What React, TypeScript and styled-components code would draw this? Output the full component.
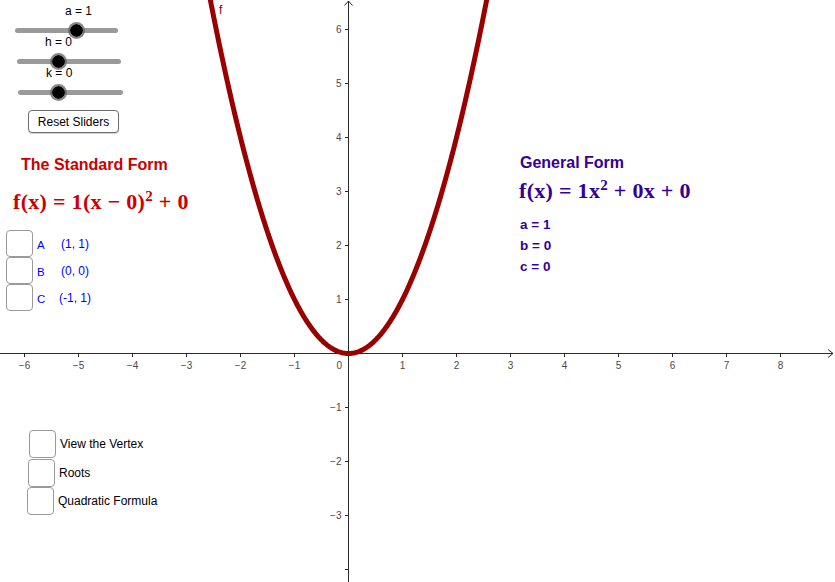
import React from "react";
import styled, { createGlobalStyle } from "styled-components";

const GlobalStyle = createGlobalStyle`
  html, body { margin: 0; padding: 0; background: #fff; }
  body { font-family: "Liberation Sans", Arial, sans-serif; }
  * { box-sizing: border-box; }
`;

const W = 835;
const H = 582;
const OX = 348.5;
const OY = 353.5;
const U = 54;

const RED = "#cc0000";
const DARKRED = "#990000";
const PURPLE = "#330099";
const BLUE = "#0000ff";

const Canvas = styled.div`
  position: relative;
  width: ${W}px;
  height: ${H}px;
  overflow: hidden;
  background: #fff;
`;

const Graph = styled.svg`
  position: absolute;
  left: 0;
  top: 0;
  display: block;
`;

const AxisLabel = styled.text`
  font-family: "Liberation Sans", Arial, sans-serif;
  font-size: 10px;
  fill: #4a4a4a;
`;

const CurveLabel = styled.text`
  font-family: "Liberation Sans", Arial, sans-serif;
  font-size: 12px;
  fill: ${DARKRED};
`;

/* ---------- sliders ---------- */
const SliderPanel = styled.div`
  position: absolute;
  left: 0;
  top: 5px;
  width: 130px;
  display: flex;
  flex-direction: column;
`;

const SliderBlock = styled.div`
  display: flex;
  flex-direction: column;
`;

const SliderLabel = styled.div<{ $left: number }>`
  margin-left: ${(p) => p.$left}px;
  height: 12px;
  font-size: 12px;
  line-height: 12px;
  color: #000;
  white-space: nowrap;
`;

const Track = styled.div<{ $left: number; $width: number }>`
  position: relative;
  margin-left: ${(p) => p.$left}px;
  margin-top: 7px;
  width: ${(p) => p.$width}px;
  height: 12px;
  &::before {
    content: "";
    position: absolute;
    left: 0;
    right: 0;
    top: 50%;
    height: 5px;
    margin-top: -2.5px;
    background: #9a9a9a;
    border-radius: 3px;
  }
`;

const Knob = styled.span<{ $pos: number }>`
  position: absolute;
  top: 50%;
  left: ${(p) => p.$pos * 100}%;
  width: 17px;
  height: 17px;
  margin: -8.5px 0 0 -8.5px;
  border: 2.5px solid rgba(95, 95, 95, 0.75);
  background: #000;
  border-radius: 50%;
  background-clip: padding-box;
`;

const ResetButton = styled.button`
  margin: 12px 0 0 28px;
  width: 91px;
  height: 23px;
  padding: 0;
  border: 1px solid #6e6e6e;
  border-radius: 4px;
  background: #fff;
  box-shadow: 0 1px 1px rgba(0, 0, 0, 0.18);
  font-family: "Liberation Sans", Arial, sans-serif;
  font-size: 12px;
  color: #000;
`;

/* ---------- form panels ---------- */
const FormPanel = styled.div<{ $left: number; $top: number; $color: string }>`
  position: absolute;
  left: ${(p) => p.$left}px;
  top: ${(p) => p.$top}px;
  display: flex;
  flex-direction: column;
  color: ${(p) => p.$color};
`;

const Title = styled.div<{ $indent: number }>`
  margin-left: ${(p) => p.$indent}px;
  font-size: 16px;
  line-height: 19px;
  font-weight: bold;
  white-space: nowrap;
`;

const Formula = styled.div<{ $indent: number; $gap: number }>`
  margin-left: ${(p) => p.$indent}px;
  margin-top: ${(p) => p.$gap}px;
  font-family: "Liberation Serif", "Times New Roman", serif;
  font-weight: bold;
  font-size: 22px;
  line-height: 28px;
  letter-spacing: 0.3px;
  white-space: pre;
  sup {
    font-size: 15px;
    line-height: 0;
    vertical-align: 0.55em;
  }
`;

const Coeffs = styled.div`
  margin-top: 9px;
  display: flex;
  flex-direction: column;
  font-size: 13.5px;
  line-height: 21px;
  font-weight: bold;
`;

/* ---------- checkboxes ---------- */
const CheckList = styled.div<{ $top: number }>`
  position: absolute;
  left: 0;
  top: ${(p) => p.$top}px;
  display: flex;
  flex-direction: column;
`;

const CheckRow = styled.div<{ $offset: number; $height: number }>`
  display: flex;
  align-items: center;
  padding-left: ${(p) => p.$offset}px;
  height: ${(p) => p.$height}px;
`;

const Box = styled.span<{ $size: number }>`
  flex: none;
  width: 27px;
  height: ${(p) => p.$size}px;
  border: 1.5px solid #9a9a9a;
  border-radius: 4px;
  background: #fff;
`;

const PointName = styled.span`
  margin-left: 4px;
  padding-top: 3px;
  width: 18px;
  font-size: 11.5px;
  color: ${BLUE};
`;

const PointCoords = styled.span`
  width: 40px;
  text-align: center;
  font-size: 12px;
  color: ${BLUE};
  white-space: nowrap;
`;

const ToggleText = styled.span`
  margin-left: 4px;
  font-size: 12px;
  color: #000;
  white-space: nowrap;
`;

function parabolaPath() {
  const pts: string[] = [];
  for (let x = -2.64; x <= 2.6401; x += 0.02) {
    const px = OX + x * U;
    const py = OY - x * x * U;
    pts.push(`${pts.length ? "L" : "M"}${px.toFixed(2)},${py.toFixed(2)}`);
  }
  return pts.join(" ");
}

const xTicks = [-6, -5, -4, -3, -2, -1, 1, 2, 3, 4, 5, 6, 7, 8];
const yTicks = [-4, -3, -2, -1, 1, 2, 3, 4, 5, 6];

const fmt = (n: number) => (n < 0 ? `\u2212${-n}` : `${n}`);

function GraphLayer() {
  return (
    <Graph width={W} height={H} viewBox={`0 0 ${W} ${H}`}>
      <g stroke="#2a2a2a" strokeWidth={1} fill="none">
        <line x1={0} y1={OY} x2={833} y2={OY} />
        <polyline points={`828,349.5 833,${OY} 828,357.5`} />
        <line x1={OX} y1={1} x2={OX} y2={H} />
        <polyline points={`344.5,5.5 ${OX},1 352.5,5.5`} />
        {xTicks.map((t) => (
          <line key={`xt${t}`} x1={OX + t * U} y1={OY} x2={OX + t * U} y2={OY + 3.5} />
        ))}
        {yTicks.map((t) => (
          <line key={`yt${t}`} x1={OX - 3.5} y1={OY - t * U} x2={OX} y2={OY - t * U} />
        ))}
      </g>
      {xTicks.map((t) => (
        <AxisLabel key={`xl${t}`} x={OX + t * U} y={368.5} textAnchor="middle">
          {fmt(t)}
        </AxisLabel>
      ))}
      <AxisLabel x={342} y={368.5} textAnchor="end">
        0
      </AxisLabel>
      {yTicks
        .filter((t) => t !== -4)
        .map((t) => (
          <AxisLabel key={`yl${t}`} x={341.5} y={OY - t * U + 3.5} textAnchor="end">
            {fmt(t)}
          </AxisLabel>
        ))}
      <path d={parabolaPath()} stroke={DARKRED} strokeWidth={5} fill="none" strokeLinejoin="round" />
      <CurveLabel x={219} y={14}>
        f
      </CurveLabel>
    </Graph>
  );
}

const sliders = [
  { name: "a = 1", labelLeft: 65, left: 15, width: 103, pos: 0.6 },
  { name: "h = 0", labelLeft: 45, left: 17, width: 104, pos: 0.395 },
  { name: "k = 0", labelLeft: 46, left: 18, width: 105, pos: 0.39 },
];

const points = [
  { name: "A", coords: "(1, 1)" },
  { name: "B", coords: "(0, 0)" },
  { name: "C", coords: "(-1, 1)" },
];

const toggles = [
  { label: "View the Vertex", offset: 29 },
  { label: "Roots", offset: 28 },
  { label: "Quadratic Formula", offset: 27 },
];

export default function App() {
  return (
    <>
      <GlobalStyle />
      <Canvas>
        <GraphLayer />

        <SliderPanel>
          {sliders.map((s) => (
            <SliderBlock key={s.name}>
              <SliderLabel $left={s.labelLeft}>{s.name}</SliderLabel>
              <Track $left={s.left} $width={s.width}>
                <Knob $pos={s.pos} />
              </Track>
            </SliderBlock>
          ))}
          <ResetButton>Reset Sliders</ResetButton>
        </SliderPanel>

        <FormPanel $left={0} $top={155} $color={RED}>
          <Title $indent={21}>The Standard Form</Title>
          <Formula $indent={13} $gap={14}>
            {"f(x) = 1(x \u2212 0)"}
            <sup>2</sup>
            {" + 0"}
          </Formula>
        </FormPanel>

        <CheckList $top={230}>
          {points.map((p) => (
            <CheckRow key={p.name} $offset={6} $height={27}>
              <Box $size={27} />
              <PointName>{p.name}</PointName>
              <PointCoords>{p.coords}</PointCoords>
            </CheckRow>
          ))}
        </CheckList>

        <FormPanel $left={520} $top={152.5} $color={PURPLE}>
          <Title $indent={0}>General Form</Title>
          <Formula $indent={-1} $gap={5}>
            {"f(x) = 1x"}
            <sup>2</sup>
            {" + 0x + 0"}
          </Formula>
          <Coeffs>
            <span>a = 1</span>
            <span>b = 0</span>
            <span>c = 0</span>
          </Coeffs>
        </FormPanel>

        <CheckList $top={430}>
          {toggles.map((t) => (
            <CheckRow key={t.label} $offset={t.offset} $height={28.5}>
              <Box $size={28} />
              <ToggleText>{t.label}</ToggleText>
            </CheckRow>
          ))}
        </CheckList>
      </Canvas>
    </>
  );
}
